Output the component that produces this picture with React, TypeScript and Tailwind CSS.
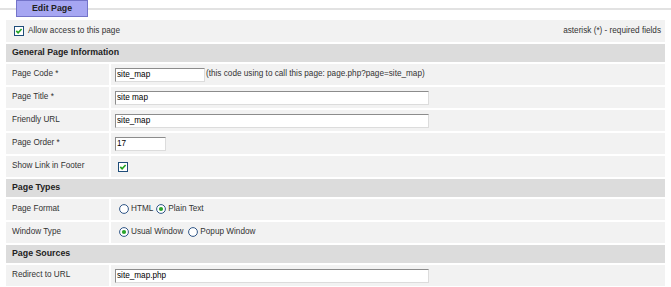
import React from "react";

// Small native-looking form controls drawn as svg
const CheckBox = () => (
  <svg width="10" height="10" viewBox="0 0 10 10" className="shrink-0">
    <rect x="0.5" y="0.5" width="9" height="9" fill="#ffffff" stroke="#1f4d7a" />
    <path d="M2.3 4.9 L4.1 6.8 L7.6 3" fill="none" stroke="#21a321" strokeWidth="1.6" />
  </svg>
);

const Radio = ({ on = false }: { on?: boolean }) => (
  <svg width="10" height="10" viewBox="0 0 10 10" className="shrink-0">
    <circle cx="5" cy="5" r="4.4" fill="#ffffff" stroke="#2f5586" />
    {on && <circle cx="5" cy="5" r="2.1" fill="#2aa52a" />}
  </svg>
);

const TextBox = ({ value, width }: { value: string; width: string }) => (
  <input
    readOnly
    value={value}
    className={`${width} h-[14px] bg-white border border-t-[#8c8c8c] border-l-[#8c8c8c] border-r-[#dcdcdc] border-b-[#dcdcdc] pl-[1px] text-black outline-none`}
  />
);

function Header({ title }: { title: string }) {
  return (
    <div className="h-[18px] bg-[#dcdcdc] pl-[6px] flex items-center font-bold text-[8.8px] text-[#222]">
      {title}
    </div>
  );
}

function Row({ label, children }: { label: string; children: React.ReactNode }) {
  return (
    <div className="flex h-[21px] gap-[2px]">
      <div className="w-[103px] shrink-0 bg-[#f2f2f2] pl-[6px] flex items-center">{label}</div>
      <div className="flex-1 bg-[#f2f2f2] pl-[4px] flex items-center">{children}</div>
    </div>
  );
}

export default function App() {
  return (
    <div className="w-[671px] h-[287px] bg-white overflow-hidden font-['Liberation_Sans',Arial,sans-serif] text-[8.2px] text-[#333]">
      {/* Tab strip */}
      <div className="flex items-center h-[17px]">
        <div className="w-[16px] border-t-2 border-[#e2e2e2]" />
        <div className="w-[72px] h-[17px] bg-[#a6a6f2] border border-[#7474c9] flex items-center justify-center font-bold text-[8.8px] text-[#222]">
          Edit Page
        </div>
        <div className="flex-1 border-t-2 border-[#e2e2e2]" />
      </div>

      <div className="mt-[3px] mx-[6px] flex flex-col gap-[2px]">
        <div className="h-[22px] bg-[#f2f2f2] flex items-center justify-between pl-[8px] pr-[4px]">
          <div className="flex items-center gap-[4px]">
            <CheckBox />
            <span>Allow access to this page</span>
          </div>
          <span>asterisk (*) - required fields</span>
        </div>

        <Header title="General Page Information" />
        <Row label="Page Code *">
          <TextBox value="site_map" width="w-[90px]" />
          <span className="ml-[1px]">(this code using to call this page: page.php?page=site_map)</span>
        </Row>
        <Row label="Page Title *">
          <TextBox value="site map" width="w-[314px]" />
        </Row>
        <Row label="Friendly URL">
          <TextBox value="site_map" width="w-[314px]" />
        </Row>
        <Row label="Page Order *">
          <TextBox value="17" width="w-[51px]" />
        </Row>
        <Row label="Show Link in Footer">
          <div className="ml-[3px]">
            <CheckBox />
          </div>
        </Row>

        <Header title="Page Types" />
        <Row label="Page Format">
          <div className="ml-[4px] flex items-center">
            <Radio />
            <span className="ml-[2px]">HTML</span>
            <div className="ml-[3px]">
              <Radio on />
            </div>
            <span className="ml-[2px]">Plain Text</span>
          </div>
        </Row>
        <Row label="Window Type">
          <div className="ml-[4px] flex items-center">
            <Radio on />
            <span className="ml-[2px]">Usual Window</span>
            <div className="ml-[5px]">
              <Radio />
            </div>
            <span className="ml-[2px]">Popup Window</span>
          </div>
        </Row>

        <Header title="Page Sources" />
        <Row label="Redirect to URL">
          <TextBox value="site_map.php" width="w-[314px]" />
        </Row>
      </div>
    </div>
  );
}
